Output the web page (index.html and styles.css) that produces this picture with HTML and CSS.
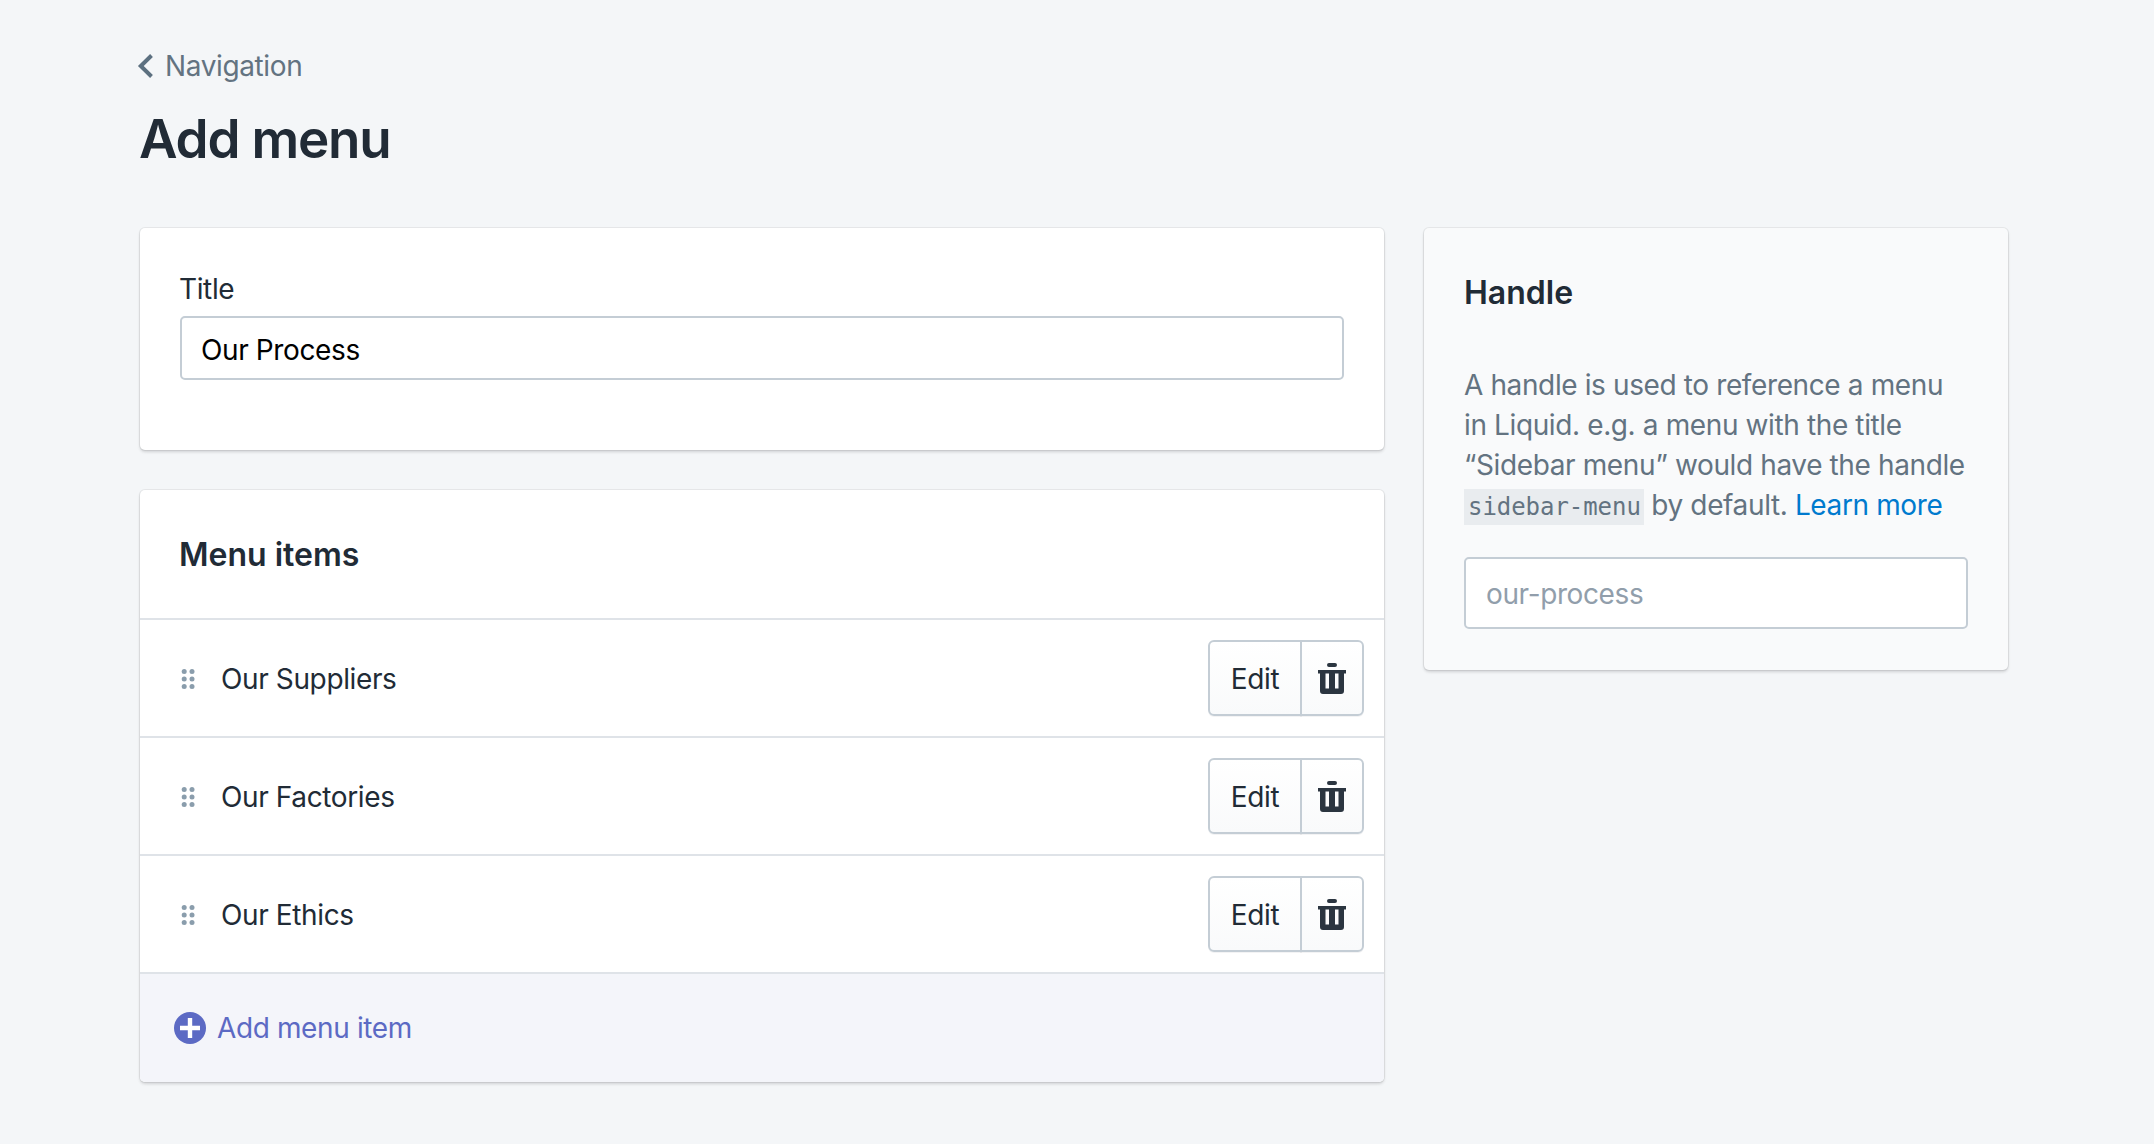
FILE: index.html
```html
<!DOCTYPE html>
<html lang="en">
<head>
<meta charset="utf-8">
<title>Add menu</title>
<link rel="stylesheet" href="styles.css">
</head>
<body>
<main class="page">
  <header class="page-head">
    <a class="back" href="#">
      <svg class="back-icon" viewBox="0 0 18 24" width="18" height="24"><path d="M15.500 1.500 4.800 12l10.700 10.500" fill="none" stroke="#5c7080" stroke-width="4"/></svg>
      <span>Navigation</span>
    </a>
    <h1 class="page-title">Add menu</h1>
  </header>
  <div class="layout">
    <div class="col-main">
      <section class="card title-card">
        <label class="field-label">Title</label>
        <div class="input title-input">Our Process</div>
      </section>
      <section class="card items-card">
        <h2 class="card-heading items-heading">Menu items</h2>
        <div class="row">
          <svg class="grip" viewBox="0 0 14 20" width="14" height="20"><g fill="#8a9dac"><circle cx="3.200" cy="2.500" r="2.500"/><circle cx="11" cy="2.500" r="2.500"/><circle cx="3.200" cy="10" r="2.500"/><circle cx="11" cy="10" r="2.500"/><circle cx="3.200" cy="17.500" r="2.500"/><circle cx="11" cy="17.500" r="2.500"/></g></svg>
          <span class="row-name">Our Suppliers</span>
          <div class="btn-group">
            <button class="btn btn-edit">Edit</button>
            <button class="btn btn-del"><svg viewBox="0 0 28 32" width="28" height="32"><path fill="#2b3540" d="M11 0h6a2 2 0 0 1 0 4h-6a2 2 0 0 1 0-4ZM0 7h28v3.600h-2V28a3 3 0 0 1-3 3H5a3 3 0 0 1-3-3V10.600H0ZM7.500 10.600V25.500H11V10.600Zm9.500 0V25.500h3.500V10.600Z"/></svg></button>
          </div>
        </div>
        <div class="row">
          <svg class="grip" viewBox="0 0 14 20" width="14" height="20"><g fill="#8a9dac"><circle cx="3.200" cy="2.500" r="2.500"/><circle cx="11" cy="2.500" r="2.500"/><circle cx="3.200" cy="10" r="2.500"/><circle cx="11" cy="10" r="2.500"/><circle cx="3.200" cy="17.500" r="2.500"/><circle cx="11" cy="17.500" r="2.500"/></g></svg>
          <span class="row-name">Our Factories</span>
          <div class="btn-group">
            <button class="btn btn-edit">Edit</button>
            <button class="btn btn-del"><svg viewBox="0 0 28 32" width="28" height="32"><path fill="#2b3540" d="M11 0h6a2 2 0 0 1 0 4h-6a2 2 0 0 1 0-4ZM0 7h28v3.600h-2V28a3 3 0 0 1-3 3H5a3 3 0 0 1-3-3V10.600H0ZM7.500 10.600V25.500H11V10.600Zm9.500 0V25.500h3.500V10.600Z"/></svg></button>
          </div>
        </div>
        <div class="row">
          <svg class="grip" viewBox="0 0 14 20" width="14" height="20"><g fill="#8a9dac"><circle cx="3.200" cy="2.500" r="2.500"/><circle cx="11" cy="2.500" r="2.500"/><circle cx="3.200" cy="10" r="2.500"/><circle cx="11" cy="10" r="2.500"/><circle cx="3.200" cy="17.500" r="2.500"/><circle cx="11" cy="17.500" r="2.500"/></g></svg>
          <span class="row-name">Our Ethics</span>
          <div class="btn-group">
            <button class="btn btn-edit">Edit</button>
            <button class="btn btn-del"><svg viewBox="0 0 28 32" width="28" height="32"><path fill="#2b3540" d="M11 0h6a2 2 0 0 1 0 4h-6a2 2 0 0 1 0-4ZM0 7h28v3.600h-2V28a3 3 0 0 1-3 3H5a3 3 0 0 1-3-3V10.600H0ZM7.500 10.600V25.500H11V10.600Zm9.500 0V25.500h3.500V10.600Z"/></svg></button>
          </div>
        </div>
        <div class="add-row">
          <svg viewBox="0 0 32 32" width="32" height="32"><circle cx="16" cy="16" r="16" fill="#5c6ac4"/><path d="M16 6v20M6 16h20" stroke="#fff" stroke-width="4.400" fill="none"/></svg>
          <span class="add-label">Add menu item</span>
        </div>
      </section>
    </div>
    <aside class="col-side">
      <section class="card handle-card">
        <h2 class="card-heading">Handle</h2>
        <p class="help">A handle is used to reference a menu in Liquid. e.g. a menu with the title “Sidebar menu” would have the handle <code class="code">sidebar-menu</code> by default. <a class="link" href="#">Learn more</a></p>
        <div class="input handle-input">our-process</div>
      </section>
    </aside>
  </div>
</main>
</body>
</html>
```

FILE: styles.css
```css
* { box-sizing: border-box; }
html, body { margin: 0; padding: 0; }
body {
  background: #f4f6f8;
  font-family: Inter, "Noto Sans", sans-serif;
  color: #212b36;
  font-size: 28px;
  letter-spacing: -0.38px;
  height: 1144px;
  overflow: hidden;
}
.page { padding: 46px 146px 0 140px; }
.page-head { height: 182px; }
.back {
  display: flex;
  align-items: center;
  gap: 11px;
  margin-left: -4px;
  height: 40px;
  color: #637381;
  text-decoration: none;
  font-size: 28px;
  line-height: 40px;
}
.page-title {
  margin: 17px 0 0 -1px;
  font-size: 53px;
  line-height: 72px;
  font-weight: 600;
  letter-spacing: -1.2px;
  color: #212b36;
}
.layout { display: flex; gap: 40px; align-items: flex-start; }
.col-main { width: 1244px; display: flex; flex-direction: column; gap: 40px; }
.col-side { width: 584px; }
.card {
  background: #fff;
  border-radius: 5px;
  box-shadow: 0 0 0 1px rgba(63,63,68,.08), 0 2px 3px rgba(63,63,68,.2);
}
.title-card { padding: 43px 40px 0; height: 222px; }
.field-label { display: block; font-size: 28px; line-height: 36px; margin-bottom: 9px; margin-left: -1px; }
.input {
  border: 2px solid #c4cdd5;
  border-radius: 5px;
  background: #fff;
  display: flex;
  align-items: center;
  padding: 2px 20px 0;
  font-size: 28px;
}
.title-input { height: 64px; color: #000; padding: 3px 19px 0; }
.card-heading { margin: 0; font-size: 32px; line-height: 40px; font-weight: 600; letter-spacing: 0; }
.items-heading { height: 128px; padding: 45px 39px 0; }
.row {
  height: 118px;
  border-top: 2px solid #dfe3e8;
  display: flex;
  align-items: center;
  padding: 0 20px 0 41px;
}
.grip { flex: none; margin-top: 2px; }
.row-name { margin-left: 26px; flex: 1; font-size: 28px; padding-top: 1px; }
.btn-group { display: flex; height: 76px; }
.btn {
  border: 2px solid #c4cdd5;
  background: linear-gradient(#fff, #f9fafb);
  box-shadow: 0 1px 0 rgba(22,29,37,.05);
  color: #212b36;
  font: inherit;
  letter-spacing: inherit;
  font-size: 28px;
  padding: 1px 0 0;
  display: flex;
  align-items: center;
  justify-content: center;
}
.btn-edit { width: 94px; border-radius: 6px 0 0 6px; }
.btn-del { width: 64px; margin-left: -2px; border-radius: 0 6px 6px 0; }
.add-row {
  height: 110px;
  border-top: 2px solid #dfe3e8;
  background: #f4f5fa;
  border-radius: 0 0 5px 5px;
  display: flex;
  align-items: center;
  padding-left: 34px;
  gap: 11px;
  color: #5c6ac4;
}
.add-label { font-size: 28px; }
.handle-card { padding: 45px 40px 0; height: 442px; background: #f9fafb; }
.help {
  margin: 52px 0 0;
  font-size: 28px;
  line-height: 40px;
  color: #637381;
}
.code {
  font-family: "DejaVu Sans Mono", "Liberation Mono", monospace;
  font-size: 24px;
  letter-spacing: -0.05px;
  background: #e9ecef;
  padding: 4px 3px 4px 4px;
}
.link { color: #007ace; text-decoration: none; }
.handle-input { margin-top: 30px; height: 72px; color: #919eab; }
```
